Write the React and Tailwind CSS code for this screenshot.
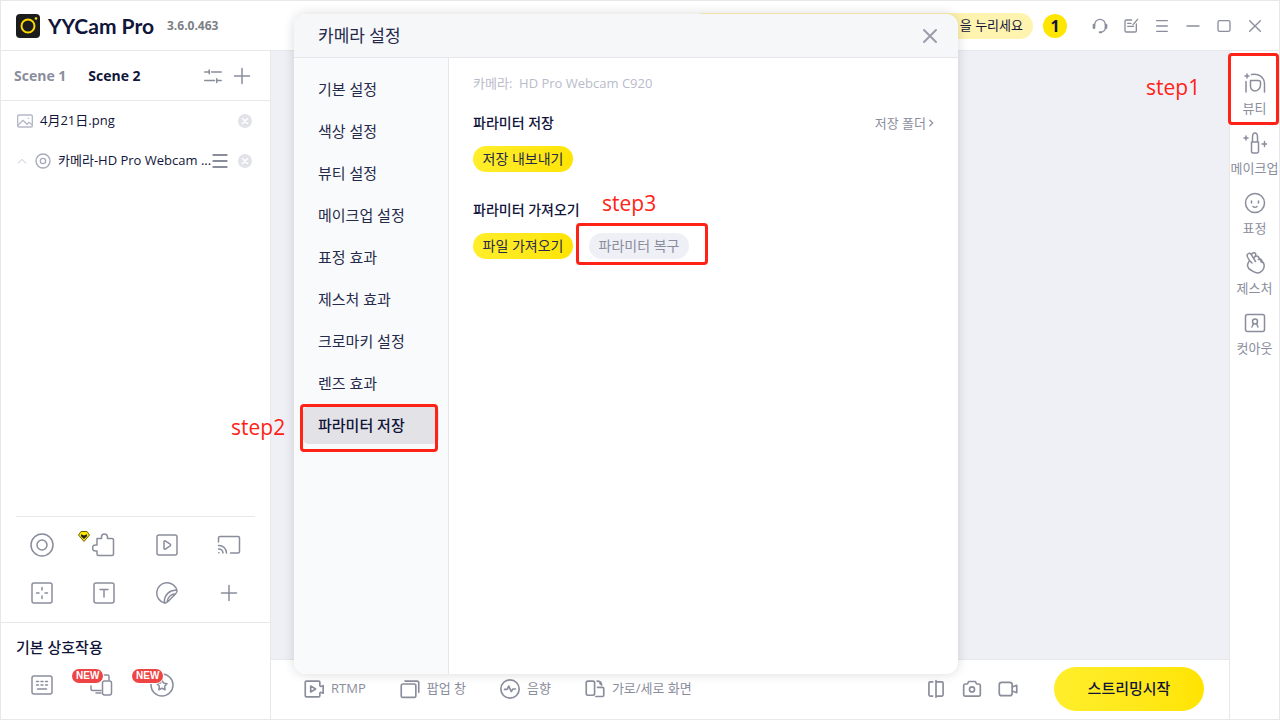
import React, { useState } from 'react';

const Icon = ({ size = 24, stroke = 1.5, className = '', children }) => (
  <svg
    width={size}
    height={size}
    viewBox="0 0 24 24"
    fill="none"
    stroke="currentColor"
    strokeWidth={stroke}
    strokeLinecap="round"
    strokeLinejoin="round"
    className={`shrink-0 ${className}`}
    aria-hidden="true"
  >
    {children}
  </svg>
);

const NAV_ITEMS = [
  '기본 설정',
  '색상 설정',
  '뷰티 설정',
  '메이크업 설정',
  '표정 효과',
  '제스처 효과',
  '크로마키 설정',
  '렌즈 효과',
  '파라미터 저장',
];

const SOURCE_TOOLS = [
  {
    label: 'Camera',
    icon: (
      <>
        <circle cx="12" cy="12" r="11" />
        <circle cx="12" cy="12" r="5" />
      </>
    ),
  },
  {
    label: 'Plugin',
    gem: true,
    icon: <path d="M5 5.5h4.5V4a3 3 0 0 1 6 0v1.500H20a1.500 1.500 0 0 1 1.500 1.500v14a1.500 1.500 0 0 1-1.500 1.500H6.500A1.500 1.500 0 0 1 5 21v-3H3.500a3 3 0 0 1 0-6H5z" />,
  },
  {
    label: 'Video',
    icon: (
      <>
        <rect x="2" y="2" width="20" height="20" rx="2" />
        <path d="M9 8.500v7a.8.8 0 0 0 1.200.7l5-3.300a1 1 0 0 0 0-1.700l-5-3.300A.8.8 0 0 0 9 8.500z" />
      </>
    ),
  },
  {
    label: 'Cast',
    icon: (
      <>
        <path d="M1.500 9V5A1.500 1.500 0 0 1 3 3.500h18A1.500 1.500 0 0 1 22.500 5v13.500A1.500 1.500 0 0 1 21 20h-7.500" />
        <path d="M1.500 12.500A7.500 7.500 0 0 1 9.500 20M1.500 16a4.200 4.200 0 0 1 4.500 4M1.800 19.700h.2" />
      </>
    ),
  },
  {
    label: 'Capture',
    icon: (
      <>
        <rect x="2" y="2" width="20" height="20" rx="2" />
        <path d="M12 6.500V9M12 15v2.500M6.500 12H9M15 12h2.500" />
      </>
    ),
  },
  {
    label: 'Text',
    icon: (
      <>
        <rect x="2" y="2" width="20" height="20" rx="2" />
        <path d="M8 8.500h8M12 8.500V16" />
      </>
    ),
  },
  {
    label: 'Sticker',
    icon: <path d="M9.500 22A10.300 10.300 0 1 1 22 9.500c.3 1.500-.5 2.500-1.500 3.500l-7.500 7.500c-1 1-2 1.700-3.500 1.500zM22 9.500C15 8.500 8.500 14 9.500 22M20.500 13c-4-.5-8 3-8.500 8" />,
  },
  { label: 'Add', icon: <path d="M12 4.500v15M4.500 12h15" /> },
];

const EFFECT_TABS = [
  {
    label: '뷰티',
    marked: true,
    icon: <path d="M3 10.500v10.500M4 3v4M2 5h4M8.500 3.500c7-1.500 13 2.500 13 9.500v8M7.500 9.500h8a2 2 0 0 1 2 2V14a6 6 0 0 1-6 6 5 5 0 0 1-4-4.500z" />,
  },
  {
    label: '메이크업',
    icon: <path d="M8.500 11h7v9.500a1.500 1.500 0 0 1-1.500 1.500h-4a1.500 1.500 0 0 1-1.500-1.500zM9.500 10.500V6c0-2 1-4 2.500-4s2.500 2 2.500 4v4.500M3 5v4M1 7h4M21.500 10.500v5M19 13h5" />,
  },
  {
    label: '표정',
    icon: (
      <>
        <circle cx="12" cy="12" r="9.500" />
        <path d="M8.500 10v2M15.500 10v2M10 15.500c1 1 3 1 4 0" />
      </>
    ),
  },
  {
    label: '제스처',
    icon: (
      <path d="M6.500 9.500 4.500 6C3.200 3.200 6.200 1 8 3.200l4.500 7.300M8.500 4c.5-2.400 3-3 4-1.500.8 1.200 0 2.500-1.500 4.500M12.500 5.500c1-.8 2.200-.5 3 .5l2.500 4M15.500 8.500c1.200-1 2.400-.5 3 .5l1.500 3M18 11c1.500-.8 2.500.3 2.800 1.500.7 2.500.7 4.500-1 6.500l-1 1c-2.300 2.500-6 2-8.300.7L7 18.500c-2.500-1.500-3-4.500-1.800-6.500l1.300-2.500 2.500 2.500" />
    ),
  },
  {
    label: '컷아웃',
    icon: (
      <>
        <rect x="2.500" y="3.500" width="19" height="17" rx="2" />
        <circle cx="12" cy="10.500" r="2.500" />
        <path d="M10.500 12.500 9 16M13.500 12.500 15 16" />
      </>
    ),
  },
];

const OUTPUT_TOOLS = [
  {
    label: 'RTMP',
    icon: (
      <>
        <path d="M19 7V4a1.500 1.500 0 0 0-1.500-1.500H3A1.500 1.500 0 0 0 1.500 4v16A1.500 1.500 0 0 0 3 21.500h14.500A1.500 1.500 0 0 0 19 20v-3l1-1 3 1V8l-3 1-1-1z" />
        <path d="M8 8.500v7l6-3.500z" />
      </>
    ),
  },
  {
    label: '팝업 창',
    icon: (
      <>
        <rect x="1.500" y="6" width="17.500" height="16" rx="2" />
        <path d="M6 2.500h14.500a2 2 0 0 1 2 2V16" />
      </>
    ),
  },
  {
    label: '음향',
    icon: (
      <>
        <circle cx="12" cy="12" r="11" />
        <path d="M5.500 12.500h3l2-4 3 6.500 2-3h3" />
      </>
    ),
  },
  {
    label: '가로/세로 화면',
    icon: (
      <>
        <rect x="1.500" y="2.500" width="10" height="17" rx="2" />
        <path d="M15 10h6a1.500 1.500 0 0 1 1.500 1.500v8A1.500 1.500 0 0 1 21 21h-8M14.500 2.500c3 0 5 1.500 5.500 4.500M20 7l-2-1.500" />
      </>
    ),
  },
];

const WINDOW_ACTIONS = [
  {
    label: 'Support',
    icon: (
      <>
        <path d="M4 10a8 8 0 0 1 16 0M20 15c-.5 3.500-3 6-6.500 6.500" />
        <path d="M3 10.500v4M21 10.500v4" strokeWidth="4" />
        <path d="M11.500 21.500h2" strokeWidth="3" />
      </>
    ),
  },
  {
    label: 'Feedback',
    icon: <path d="M13 3H5a2 2 0 0 0-2 2v14a2 2 0 0 0 2 2h13a2 2 0 0 0 2-2V9M7 8h5M7 12.500h9M22 2l-7 8" />,
  },
  { label: 'Menu', icon: <path d="M4 4h16M4 12h16M4 20h16" /> },
  { label: 'Minimize', icon: <path d="M3 12h18" /> },
  { label: 'Maximize', icon: <rect x="3" y="4" width="18" height="16" rx="2.500" /> },
  { label: 'Close', icon: <path d="M4 4l16 16M20 4 4 20" /> },
];

const RemoveButton = () => (
  <button type="button" aria-label="Remove" className="text-[#e2e3e8]">
    <svg width="14" height="14" viewBox="0 0 14 14" aria-hidden="true">
      <circle cx="7" cy="7" r="7" fill="currentColor" />
      <path d="M4.500 4.500l5 5M9.500 4.500l-5 5" stroke="#fff" strokeWidth="1.500" strokeLinecap="round" />
    </svg>
  </button>
);

const Header = () => (
  <header className="flex h-[50px] shrink-0 items-center border-b border-[#e8e8ea] pl-[15px] pr-[9px]">
    <svg width="24" height="24" viewBox="0 0 24 24" aria-hidden="true">
      <rect width="24" height="24" rx="4" fill="#1c1c1c" />
      <circle cx="12" cy="12" r="6.500" fill="none" stroke="#ffd800" strokeWidth="2" />
      <circle cx="20" cy="4.500" r="1.300" fill="#ffe600" />
    </svg>
    <h1 className="ml-2 font-['Lato','Liberation_Sans',sans-serif] text-[21px] font-bold leading-6 text-[#11153a]">YYCam Pro</h1>
    <span className="ml-[13px] text-xs font-bold text-[#7d8085]">3.6.0.463</span>
    <div className="ml-auto flex h-[26px] w-[342px] items-center justify-end rounded-full bg-[#fff3b0] pr-[10px] text-[13px] text-[#11153a]">
      을 누리세요
    </div>
    <span className="ml-[10px] flex h-6 w-6 items-center justify-center rounded-full bg-[#ffe600] text-base font-bold text-[#11153a]">1</span>
    <div className="ml-[17px] flex text-[#8a8d9c]">
      {WINDOW_ACTIONS.map((action) => (
        <button key={action.label} type="button" aria-label={action.label} className="flex w-[31px] items-center justify-center">
          <Icon size={16} stroke={2}>{action.icon}</Icon>
        </button>
      ))}
    </div>
  </header>
);

const NewBadge = () => (
  <span className="absolute -left-[18px] -top-1 rounded-full bg-[#ef4444] px-1 font-['Liberation_Sans',sans-serif] text-[10px] font-bold leading-[14px] text-white ring-1 ring-white">
    NEW
  </span>
);

const ScenePanel = () => (
  <aside className="flex w-[270px] shrink-0 flex-col border-r border-[#e8e8ea]">
    <div className="flex h-[50px] items-center border-b border-[#e8e8ea] pl-[13px] pr-[19px] text-sm font-bold">
      <button type="button" className="text-[#8a8d9c]">Scene 1</button>
      <button type="button" className="ml-[22px] text-[#11153a]">Scene 2</button>
      <button type="button" aria-label="Scene settings" className="ml-auto text-[#8a8d9c]">
        <Icon size={18} stroke={2}>
          <path d="M1 6.500h5M10 6.500h13M7 4v5M1 18h13M18 18h5M17 15.500v5" />
        </Icon>
      </button>
      <button type="button" aria-label="Add scene" className="ml-[11px] text-[#8a8d9c]">
        <Icon size={18} stroke={2}>
          <path d="M12 2v20M2 12h20" />
        </Icon>
      </button>
    </div>

    {/* Source list */}
    <ul className="text-[13px] text-[#11153a]">
      <li className="flex h-10 items-center pl-4 pr-[18px]">
        <Icon size={16} stroke={2} className="mr-[7px] text-[#b5b8c8]">
          <rect x="1" y="3" width="22" height="18" rx="2" />
          <path d="M2 18l7-7 6 6 3-3 5 4M17 8h.5" />
        </Icon>
        <span className="flex-1">4月21日.png</span>
        <RemoveButton />
      </li>
      <li className="flex h-10 items-center pl-4 pr-[18px]">
        <Icon size={10} stroke={2} className="mr-2 text-[#b5b8c8]">
          <path d="M3 17l9-9 9 9" />
        </Icon>
        <Icon size={16} stroke={2} className="mr-[7px] text-[#a7aaba]">
          <circle cx="12" cy="12" r="10.500" />
          <circle cx="12" cy="12" r="4" />
        </Icon>
        <span className="whitespace-nowrap">카메라-HD Pro Webcam ...</span>
        <button type="button" aria-label="Source menu" className="ml-auto mr-[10px] text-[#8a8d9c]">
          <Icon size={16} stroke={3}>
            <path d="M2 3h20M2 12h20M2 21h20" />
          </Icon>
        </button>
        <RemoveButton />
      </li>
    </ul>

    {/* Source types */}
    <div className="mx-[15px] mt-auto border-t border-[#e8e8ea]" />
    <div className="grid grid-cols-4 gap-y-6 px-[10px] pb-[17px] pt-4 text-[#8a8d9c]">
      {SOURCE_TOOLS.map((tool) => (
        <button key={tool.label} type="button" aria-label={tool.label} className="relative flex justify-center">
          <Icon>{tool.icon}</Icon>
          {tool.gem && (
            <svg width="12" height="11" viewBox="0 0 12 11" className="absolute -top-[2px] left-[5px]" aria-hidden="true">
              <path d="M3 .5h6L11.500 4 6 10.500.500 4z" fill="#ffe600" stroke="#6b6400" strokeWidth="1" />
              <path d="M3 3.200 6 4.500l3-1.300v2L6 8 3 5.200z" fill="#222" />
            </svg>
          )}
        </button>
      ))}
    </div>

    {/* Interaction tools */}
    <section className="h-[97px] border-t border-[#e8e8ea] px-[15px] pt-[14px]">
      <h2 className="text-[15px] font-medium leading-5 text-[#11153a]">기본 상호작용</h2>
      <div className="mt-4 flex gap-9 pl-[14px] text-[#8a8d9c]">
        <button type="button" aria-label="Keyboard">
          <Icon>
            <rect x="2" y="3" width="20" height="18" rx="2" />
            <path d="M6.500 8.500h2M11 8.500h2M15.500 8.500h2M6.500 12h2M11 12h2M15.500 12h2M7.500 16h9" />
          </Icon>
        </button>
        <button type="button" aria-label="Devices" className="relative">
          <Icon>
            <rect x="12.500" y="8" width="9" height="14" rx="2" />
            <path d="M13 2h4.500A1.500 1.500 0 0 1 19 3.500V7M1 13v3a1.500 1.500 0 0 0 1.500 1.500H11M6 20h5" />
          </Icon>
          <NewBadge />
        </button>
        <button type="button" aria-label="Effects" className="relative">
          <Icon>
            <circle cx="12" cy="12" r="11" />
            <path d="M12 7l1.600 3.100 3.400.6-2.400 2.500.5 3.500L12 15.200l-3.100 1.500.5-3.500L7 10.700l3.400-.6z" />
          </Icon>
          <NewBadge />
        </button>
      </div>
    </section>
  </aside>
);

const OutputBar = () => (
  <footer className="flex h-[60px] shrink-0 items-center border-t border-[#e8e8ea] bg-white pb-[2px] pl-[33px] pr-[25px] text-[13px] text-[#8a8d9c]">
    <div className="flex gap-[34px]">
      {OUTPUT_TOOLS.map((tool) => (
        <button key={tool.label} type="button" className="flex items-center gap-[7px]">
          <Icon size={20} stroke={2}>{tool.icon}</Icon>
          {tool.label}
        </button>
      ))}
    </div>
    <div className="ml-auto flex gap-4">
      <button type="button" aria-label="Mirror">
        <Icon size={20} stroke={2}>
          <path d="M8 3.500H5A1.500 1.500 0 0 0 3.500 5v14A1.500 1.500 0 0 0 5 20.500h3M12 2v20M12 3.500h7A1.500 1.500 0 0 1 20.500 5v14a1.500 1.500 0 0 1-1.500 1.500h-7" />
        </Icon>
      </button>
      <button type="button" aria-label="Snapshot">
        <Icon size={20} stroke={2}>
          <path d="M8 3h8l1.500 3H20a2 2 0 0 1 2 2v10.500a2 2 0 0 1-2 2H4a2 2 0 0 1-2-2V8a2 2 0 0 1 2-2h2.500z" />
          <circle cx="12" cy="12.500" r="3" />
        </Icon>
      </button>
      <button type="button" aria-label="Record">
        <Icon size={20} stroke={2}>
          <rect x="1.500" y="4" width="15.500" height="16" rx="3" />
          <path d="M17 9.500l5.500-2v9l-5.500-2" />
        </Icon>
      </button>
    </div>
    <button
      type="button"
      className="ml-9 h-11 w-[150px] rounded-full bg-linear-to-r from-[#ffee2a] to-[#ffe400] text-[15px] font-medium text-[#11153a]"
    >
      스트리밍시작
    </button>
  </footer>
);

const EffectRail = () => (
  <nav className="flex w-[50px] shrink-0 flex-col border-l border-[#e8e8ea] pt-[11px]">
    {EFFECT_TABS.map((tab) => (
      <button key={tab.label} type="button" className="relative flex h-15 flex-col items-center justify-center gap-[3px] text-[13px] leading-5 text-[#8a8d9c]">
        <Icon className="mt-1">{tab.icon}</Icon>
        <span className="whitespace-nowrap">{tab.label}</span>
        {tab.marked && (
          <>
            <span className="absolute -left-[2px] -top-[9px] h-[72px] w-[51px] rounded-sm border-3 border-[#ff2216]" />
            <span className="absolute -left-[84px] top-[10px] text-[21px] leading-[30px] text-[#ff2216]">step1</span>
          </>
        )}
      </button>
    ))}
  </nav>
);

const CameraSettings = ({ onClose }) => {
  const [active, setActive] = useState('파라미터 저장');

  return (
    <div
      role="dialog"
      aria-label="카메라 설정"
      className="absolute left-[293px] top-[13px] flex h-[660px] w-[664px] flex-col rounded-xl bg-white text-[#262a4a] shadow-[0_0_12px_rgba(0,0,0,0.15)]"
    >
      <div className="flex h-11 shrink-0 items-center justify-between rounded-t-xl border-b border-[#e6e7ea] bg-[#f6f7f9] pl-6 pr-5">
        <h2 className="text-[17px]">카메라 설정</h2>
        <button type="button" aria-label="Close" onClick={onClose} className="text-[#9a9daa]">
          <Icon size={16} stroke={3}>
            <path d="M3 3l18 18M21 3 3 21" />
          </Icon>
        </button>
      </div>

      <div className="flex min-h-0 flex-1">
        <nav className="flex w-[155px] shrink-0 flex-col gap-1 rounded-bl-xl border-r border-[#e6e7ea] bg-[#f9fafc] px-[9px] pt-3">
          {NAV_ITEMS.map((item) => (
            <button
              key={item}
              type="button"
              onClick={() => setActive(item)}
              className={`relative h-[38px] rounded-md pl-[15px] text-left text-[15px] ${
                item === active ? 'bg-[#e3e2e7] font-medium text-[#11153a]' : ''
              }`}
            >
              {item}
              {item === '파라미터 저장' && (
                <>
                  <span className="absolute -left-[3px] -top-[2px] h-12 w-[138px] rounded-sm border-3 border-[#ff2216]" />
                  <span className="absolute -left-[72px] top-[6px] text-[21px] font-normal leading-[30px] text-[#ff2216]">step2</span>
                </>
              )}
            </button>
          ))}
        </nav>

        <div className="flex-1 pl-6 pr-[22px] pt-[15px]">
          <p className="text-[13px] leading-5 text-[#b9bbca]">카메라:&nbsp; HD Pro Webcam C920</p>

          <section className="mt-5">
            <div className="flex items-center justify-between">
              <h3 className="text-sm font-medium leading-5 text-[#11153a]">파라미터 저장</h3>
              <a href="#folder" className="flex items-center text-[13px] leading-5 text-[#8a8d9c]">
                저장 폴더
                <Icon size={10} stroke={3}>
                  <path d="M9 5l7 7-7 7" />
                </Icon>
              </a>
            </div>
            <button type="button" className="mt-[13px] block h-[26px] w-[100px] rounded-full bg-linear-to-r from-[#ffee2a] to-[#ffe400] text-sm leading-5">
              저장 내보내기
            </button>
          </section>

          <section className="mt-7">
            <h3 className="text-sm font-medium leading-5 text-[#11153a]">파라미터 가져오기</h3>
            <div className="mt-[13px] flex gap-4">
              <button type="button" className="h-[26px] w-[100px] rounded-full bg-linear-to-r from-[#ffee2a] to-[#ffe400] text-sm leading-5">
                파일 가져오기
              </button>
              <div className="relative">
                <button type="button" className="h-[26px] w-[100px] rounded-full bg-[#eff0f6] text-sm leading-5 text-[#8a8d9c]">
                  파라미터 복구
                </button>
                <span className="absolute -left-[13px] -top-[10px] h-[42px] w-[132px] rounded-sm border-3 border-[#ff2216]" />
                <span className="absolute -top-[45px] left-[13px] text-[21px] leading-[30px] text-[#ff2216]">step3</span>
              </div>
            </div>
          </section>
        </div>
      </div>
    </div>
  );
};

const App = () => {
  const [settingsOpen, setSettingsOpen] = useState(true);

  return (
    <div className="relative flex min-h-screen flex-col border border-[#e8e8ea] bg-white font-['Open_Sans','Noto_Sans_CJK_KR',sans-serif]">
      <Header />
      <div className="flex flex-1">
        <ScenePanel />
        <main className="flex min-w-0 flex-1 flex-col">
          <div className="flex-1 bg-[#eff0f6]" />
          <OutputBar />
        </main>
        <EffectRail />
      </div>
      {settingsOpen && <CameraSettings onClose={() => setSettingsOpen(false)} />}
    </div>
  );
};

export default App;
